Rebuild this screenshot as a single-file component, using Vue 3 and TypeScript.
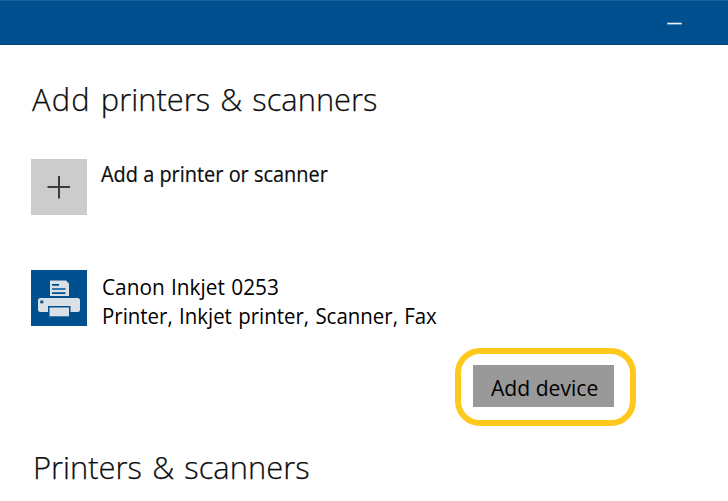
<script setup lang="ts">
interface Device {
  name: string
  kinds: string
}

const device: Device = {
  name: 'Canon Inkjet 0253',
  kinds: 'Printer, Inkjet printer, Scanner, Fax',
}
</script>

<template>
  <div class="window">
    <header class="titlebar">
      <svg class="minimize" width="15" height="3" viewBox="0 0 15 3">
        <rect x="0.3" y="0.7" width="14.4" height="1.7" fill="#eaf3fa" />
      </svg>
    </header>
    <main class="content">
      <h1 class="heading"><span class="t-heading"><b class="lead">Add</b> printers &amp; scanners</span></h1>
      <div class="row add-row">
        <div class="tile add-tile">
          <svg width="56" height="56" viewBox="0 0 56 56">
            <path d="M16.5 28H39M28 17V39.5" stroke="#3c3c3c" stroke-width="2" fill="none" />
          </svg>
        </div>
        <div class="label add-label"><span class="t-add">Add a printer or scanner</span></div>
      </div>
      <div class="row device-row">
        <div class="tile device-tile">
          <svg width="56" height="56" viewBox="0 0 56 56">
            <path d="M19 10.5H35L38 13.5V26H19Z" fill="#dbe0e7" />
            <path d="M21 14.8H28M21 19H34.5M21 23.2H34.5" stroke="#00508f" stroke-width="1.7" />
            <path d="M9.5 28H46.5Q49 28 49 30.5V39.5Q49 42 46.5 42H9.5Q7 42 7 39.5V30.5Q7 28 9.5 28Z" fill="#dbe0e7" />
            <rect x="9.3" y="30.5" width="3" height="2.8" fill="#00508f" />
            <rect x="17" y="36" width="22.5" height="11" fill="#00508f" />
            <rect x="18.5" y="37.5" width="19.5" height="8.8" fill="#dbe0e7" />
          </svg>
        </div>
        <div class="label device-label">
          <div><span class="t-name">{{ device.name }}</span></div>
          <div><span class="t-kinds">{{ device.kinds }}</span></div>
        </div>
      </div>
      <div class="actions">
        <div class="highlight">
          <button class="add-button" type="button"><span class="t-button">Add device</span></button>
        </div>
      </div>
      <h2 class="heading second"><span class="t-second">Printers &amp; scanners</span></h2>
    </main>
  </div>
</template>

<style>
body {
  background: #fff;
}
</style>

<style scoped>
.window {
  box-sizing: border-box;
  width: 728px;
  height: 501px;
  overflow: hidden;
  background: #fff;
  color: #0c0c0c;
  font-family: 'Open Sans', 'Noto Sans', sans-serif;
}
.window span {
  display: inline-block;
  white-space: nowrap;
  transform-origin: 0 50%;
}
.titlebar {
  box-sizing: border-box;
  display: flex;
  justify-content: flex-end;
  height: 45px;
  padding: 21px 46px 0 0;
  background: #00508f;
  border-top: 1px solid #1a6299;
  border-bottom: 1px solid #07497f;
}
.content {
  padding-left: 31px;
}
.heading {
  height: 44px;
  margin: 0;
  padding-top: 32px;
  font-size: 32px;
  line-height: 44px;
  font-weight: 300;
  -webkit-text-stroke: 0.25px #0c0c0c;
}
.lead {
  font-weight: 300;
  letter-spacing: 1.2px;
}
.row {
  display: flex;
  height: 56px;
}
.add-row {
  margin-top: 38px;
}
.device-row {
  margin-top: 55px;
}
.tile {
  flex: none;
  width: 56px;
  height: 56px;
}
.tile svg {
  display: block;
}
.add-tile {
  background: #ccc;
}
.device-tile {
  background: #00508f;
}
.add-label {
  padding-left: 14px;
  font-size: 21.5px;
  line-height: 30px;
  -webkit-text-stroke: 0.2px #0c0c0c;
}
.device-label {
  padding: 3px 0 0 15px;
  font-size: 21px;
  line-height: 29px;
  color: #000;
}
.actions {
  display: flex;
  margin: 22px 0 0 424px;
}
.highlight {
  box-sizing: border-box;
  width: 181px;
  height: 78px;
  padding: 11px 12px;
  border: 6px solid #ffc81c;
  border-radius: 25px;
}
.add-button {
  box-sizing: border-box;
  display: block;
  width: 141px;
  height: 42px;
  padding: 2px 0 0 18px;
  border: 0;
  background: #999;
  color: #000;
  font: 22px/41px 'Open Sans', 'Noto Sans', sans-serif;
  text-align: left;
}
.second {
  padding: 19px 0 0 2px;
}
.t-heading { transform: translateX(1px) scaleX(0.964); word-spacing: 2.2px; }
.t-second { transform: scaleX(0.965); word-spacing: 2.2px; }
.t-add { transform: scaleX(0.927); }
.t-name { transform: scaleX(0.99); word-spacing: 1px; }
.t-kinds { transform: scaleX(0.973); word-spacing: 1px; }
.t-button { transform: scaleX(0.96); }
</style>
